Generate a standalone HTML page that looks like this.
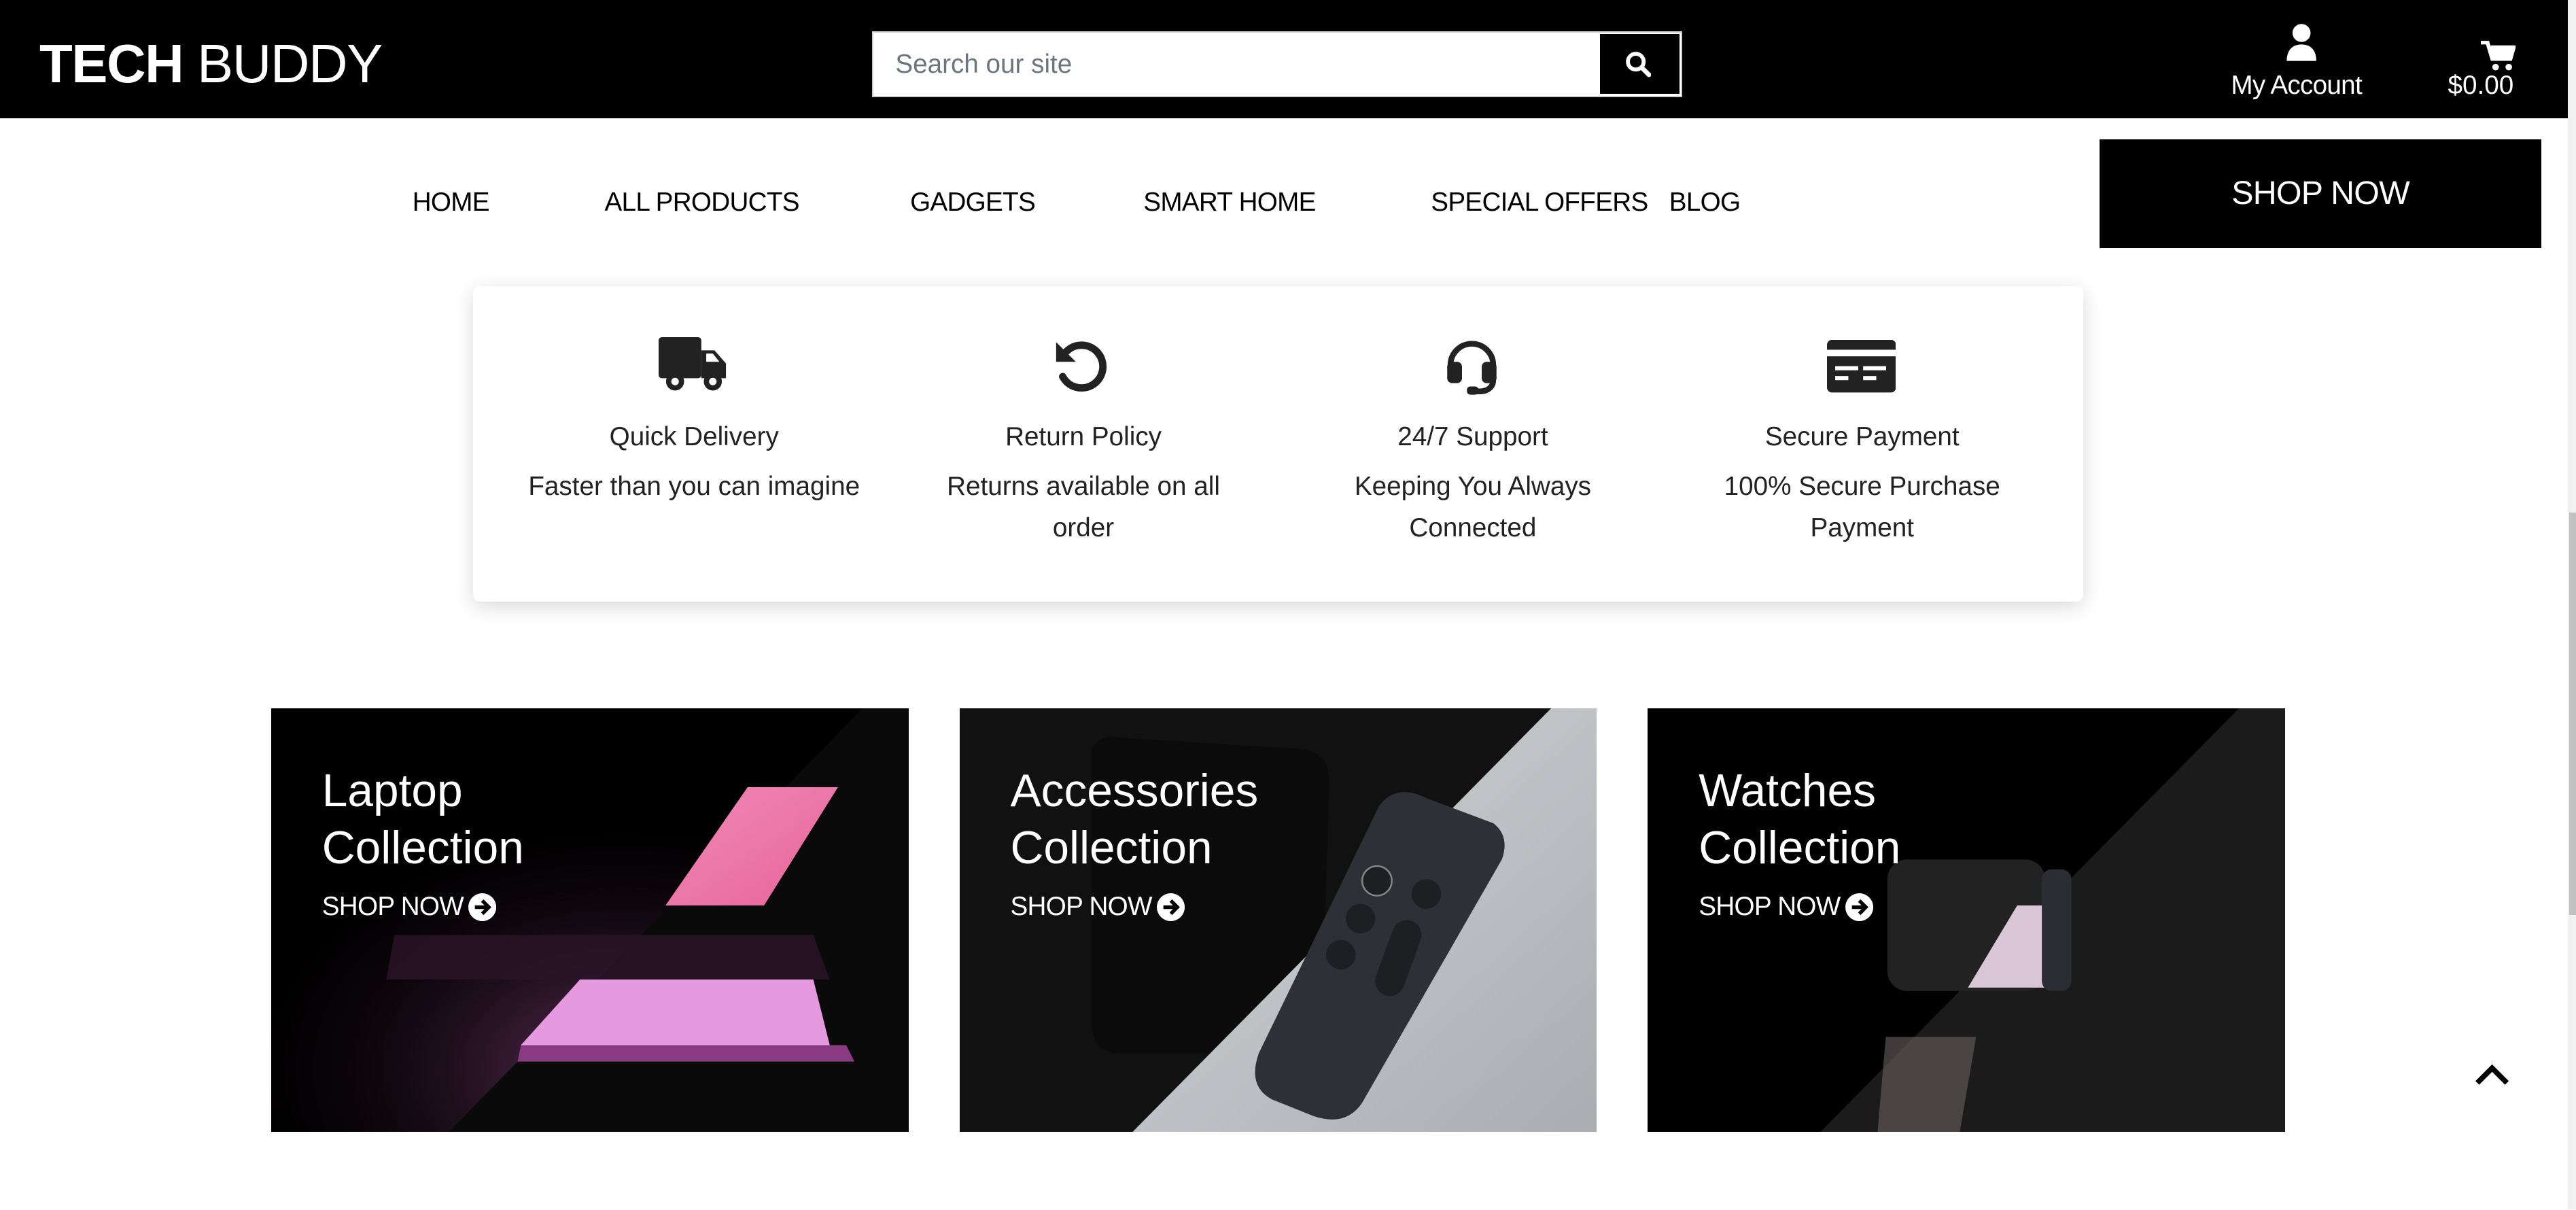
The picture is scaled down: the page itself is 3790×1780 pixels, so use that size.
<!DOCTYPE html>
<html><head><meta charset="utf-8"><style>
*{margin:0;padding:0;box-sizing:border-box}
html,body{width:3790px;height:1780px;overflow:hidden;background:#fff}
#w{width:1568px;height:736px;position:relative;zoom:2.4171;font-family:"Liberation Sans",sans-serif;color:#222}
.a{position:absolute;white-space:nowrap}
.hdr{left:0;top:0;width:1563px;height:72px;background:#000}
.nav{top:114px;font-size:16px;color:#000;letter-spacing:-0.3px}
.ft{position:absolute;width:237px;text-align:center;font-size:16px;color:#222}
.ft .t{position:absolute;top:74px;width:100%}
.ft .d{position:absolute;top:101px;left:17px;width:203px;line-height:25px;white-space:normal}
.card{position:absolute;top:431px;width:388px;height:258px;overflow:hidden;background:#000}
.card .tt{position:absolute;left:31px;top:33px;font-size:28px;line-height:35px;color:#fff}
.card .sn{position:absolute;left:31px;top:112px;font-size:16px;color:#fff;display:flex;align-items:center;gap:3px;letter-spacing:-0.3px}
</style></head><body><div id="w">
<div class="a hdr"></div>
<div class="a" style="left:24px;top:20px;font-size:33px;color:#fff;letter-spacing:-0.6px"><b>TECH</b> BUDDY</div>
<div class="a" style="left:531px;top:19px;width:493px;height:40px;background:#fff;border:1px solid #ccc"></div>
<div class="a" style="left:545px;top:30px;font-size:16px;color:#6c757d">Search our site</div>
<div class="a" style="left:973px;top:20px;width:50px;height:38px;background:#000;border:1px solid #fff"></div>
<svg class="a" style="left:989px;top:31px" width="16" height="16" viewBox="0 0 16 16"><circle cx="6.5" cy="6.5" r="4.8" fill="none" stroke="#fff" stroke-width="2.4"/><path d="M10 10l4.5 4.5" stroke="#fff" stroke-width="2.8" stroke-linecap="round"/></svg>
<svg class="a" style="left:1391px;top:14px" width="20" height="24" viewBox="0 0 20 24"><circle cx="10" cy="6" r="5.5" fill="#fff"/><path d="M1 23c0-6 3-10 9-10s9 4 9 10z" fill="#fff"/></svg>
<div class="a" style="left:1358px;top:43px;font-size:16px;color:#fff;letter-spacing:-0.3px">My Account</div>
<svg class="a" style="left:1510px;top:25px" width="21" height="19" viewBox="0 0 21 19"><path d="M0 1h4l3 10h11l2-7H6" fill="none" stroke="#fff" stroke-width="2.4"/><path d="M6 4h14l-2 7H8z" fill="#fff"/><circle cx="9" cy="16" r="2" fill="#fff"/><circle cx="17" cy="16" r="2" fill="#fff"/></svg>
<div class="a" style="left:1490px;top:43px;font-size:16px;color:#fff">$0.00</div>
<div class="a" style="left:1563px;top:0;width:5px;height:736px;background:#f1f1f1"></div>
<div class="a" style="left:1564px;top:312px;width:4px;height:245px;background:#c1c1c1"></div>

<div class="a nav" style="left:251px">HOME</div>
<div class="a nav" style="left:368px">ALL PRODUCTS</div>
<div class="a nav" style="left:554px">GADGETS</div>
<div class="a nav" style="left:696px">SMART HOME</div>
<div class="a nav" style="left:871px">SPECIAL OFFERS</div>
<div class="a nav" style="left:1016px">BLOG</div>
<div class="a" style="left:1278px;top:85px;width:269px;height:66px;background:#000;color:#fff;font-size:20px;text-align:center;line-height:66px;letter-spacing:-0.3px">SHOP NOW</div>

<div class="a" style="left:288px;top:174px;width:980px;height:192px;background:#fff;border-radius:4px;box-shadow:0 3px 12px rgba(0,0,0,.15)"></div>
<div class="ft" style="left:304px;top:183px">
<svg style="position:absolute;left:97px;top:22px" width="42" height="34" viewBox="0 0 42 34"><rect x="0" y="0" width="26" height="25" rx="2" fill="#222"/><path d="M26 8h8l7 8v9H26z" fill="#222"/><path d="M29 10h4l4 5h-8z" fill="#fff"/><circle cx="10" cy="27" r="5.5" fill="#222"/><circle cx="10" cy="27" r="2.3" fill="#fff"/><circle cx="33" cy="27" r="5.5" fill="#222"/><circle cx="33" cy="27" r="2.3" fill="#fff"/></svg>
<div class="t">Quick Delivery</div><div class="d">Faster than you can imagine</div></div>
<div class="ft" style="left:541px;top:183px">
<svg style="position:absolute;left:100px;top:22px" width="36" height="36" viewBox="0 0 36 36"><path d="M8 9A13 13 0 1 1 6 24" fill="none" stroke="#222" stroke-width="4.5" stroke-linecap="round"/><path d="M2 3v12h12z" fill="#222"/></svg>
<div class="t">Return Policy</div><div class="d">Returns available on all order</div></div>
<div class="ft" style="left:778px;top:183px">
<svg style="position:absolute;left:100px;top:22px" width="36" height="36" viewBox="0 0 36 36"><path d="M5 20v-3a13 13 0 0 1 26 0v9c0 4-3 7-8 7h-4" fill="none" stroke="#222" stroke-width="3.5"/><rect x="3" y="15" width="9" height="13" rx="3" fill="#222"/><rect x="24" y="15" width="9" height="13" rx="3" fill="#222"/><rect x="15" y="30" width="7" height="5" rx="2" fill="#222"/></svg>
<div class="t">24/7 Support</div><div class="d">Keeping You Always Connected</div></div>
<div class="ft" style="left:1015px;top:183px">
<svg style="position:absolute;left:97px;top:24px" width="42" height="32" viewBox="0 0 42 32"><rect x="0" y="0" width="42" height="32" rx="3" fill="#222"/><rect x="0" y="6" width="42" height="4" fill="#fff"/><rect x="5" y="16" width="14" height="2.5" fill="#fff"/><rect x="22" y="16" width="14" height="2.5" fill="#fff"/><rect x="5" y="22" width="8" height="2.5" fill="#fff"/><rect x="22" y="22" width="8" height="2.5" fill="#fff"/></svg>
<div class="t">Secure Payment</div><div class="d">100% Secure Purchase Payment</div></div>

<div class="card" style="left:165px">
<svg width="388" height="258" viewBox="0 0 388 258" style="position:absolute;left:0;top:0">
<defs><radialGradient id="pk" cx="0.55" cy="0.85" r="0.6"><stop offset="0" stop-color="#d46ac8"/><stop offset="1" stop-color="#1a0716" stop-opacity="0"/></radialGradient>
<linearGradient id="sc" x1="0" y1="0" x2="1" y2="1"><stop offset="0" stop-color="#f08ab8"/><stop offset="1" stop-color="#e8649a"/></linearGradient></defs>
<rect width="388" height="258" fill="#000"/>
<rect width="388" height="258" fill="url(#pk)" opacity=".45"/>
<path d="M360 0H388V258H108z" fill="#0a0a0a"/>
<path d="M290 48H345L300 120H240z" fill="url(#sc)"/>
<path d="M75 138H330L340 165H70z" fill="#2a1428" opacity=".8"/>
<path d="M188 165H330L340 205H152z" fill="#e59ae0"/>
<path d="M152 205H350L355 215H150z" fill="#8a3a80"/>
</svg>
<div class="tt">Laptop<br>Collection</div>
<div class="sn">SHOP NOW <svg width="17" height="17" viewBox="0 0 17 17"><circle cx="8.5" cy="8.5" r="8.5" fill="#fff"/><path d="M4 8.5h8M8.5 4.5l4 4-4 4" stroke="#000" stroke-width="2.2" fill="none"/></svg></div>
</div>

<div class="card" style="left:584px;background:#111">
<svg width="388" height="258" viewBox="0 0 388 258" style="position:absolute;left:0;top:0">
<defs><linearGradient id="gr" x1="0" y1="0" x2="1" y2="1"><stop offset="0" stop-color="#d4d6d8"/><stop offset="1" stop-color="#a9adb2"/></linearGradient></defs>
<rect width="388" height="258" fill="#111"/>
<path d="M80 25Q85 15 100 18L210 25Q225 28 225 45L220 195Q218 210 200 210H95Q80 208 80 190z" fill="#0b0b0b"/>
<path d="M360 0H388V258H105z" fill="url(#gr)"/>
<path d="M255 60Q265 45 285 55L325 70Q335 78 330 92L245 240Q235 255 215 248L190 238Q175 230 182 210z" fill="#2d3036"/>
<circle cx="254" cy="105" r="9" fill="#1d1f23" stroke="#888" stroke-width="1"/>
<circle cx="284" cy="113" r="9" fill="#1d1f23"/>
<circle cx="244" cy="128" r="9" fill="#1d1f23"/>
<circle cx="232" cy="150" r="9" fill="#1d1f23"/>
<rect x="258" y="128" width="18" height="48" rx="9" fill="#1d1f23" transform="rotate(20 267 152)"/>
</svg>
<div class="tt">Accessories<br>Collection</div>
<div class="sn">SHOP NOW <svg width="17" height="17" viewBox="0 0 17 17"><circle cx="8.5" cy="8.5" r="8.5" fill="#fff"/><path d="M4 8.5h8M8.5 4.5l4 4-4 4" stroke="#000" stroke-width="2.2" fill="none"/></svg></div>
</div>

<div class="card" style="left:1003px;background:#000">
<svg width="388" height="258" viewBox="0 0 388 258" style="position:absolute;left:0;top:0">
<rect width="388" height="258" fill="#000"/>
<path d="M360 0H388V258H105z" fill="#1b1b1b"/>
<rect x="146" y="92" width="96" height="80" rx="12" fill="#222"/>
<path d="M225 120H242V170H195z" fill="#d9c6d6"/>
<rect x="240" y="98" width="18" height="74" rx="6" fill="#2a2d33"/>
<path d="M145 200H200L190 258H140z" fill="#6b6260" opacity=".6"/>
</svg>
<div class="tt">Watches<br>Collection</div>
<div class="sn">SHOP NOW <svg width="17" height="17" viewBox="0 0 17 17"><circle cx="8.5" cy="8.5" r="8.5" fill="#fff"/><path d="M4 8.5h8M8.5 4.5l4 4-4 4" stroke="#000" stroke-width="2.2" fill="none"/></svg></div>
</div>

<svg class="a" style="left:1506px;top:647px" width="22" height="14" viewBox="0 0 22 14"><path d="M2 12L11 3l9 9" fill="none" stroke="#000" stroke-width="3.2"/></svg>
</div></body></html>
